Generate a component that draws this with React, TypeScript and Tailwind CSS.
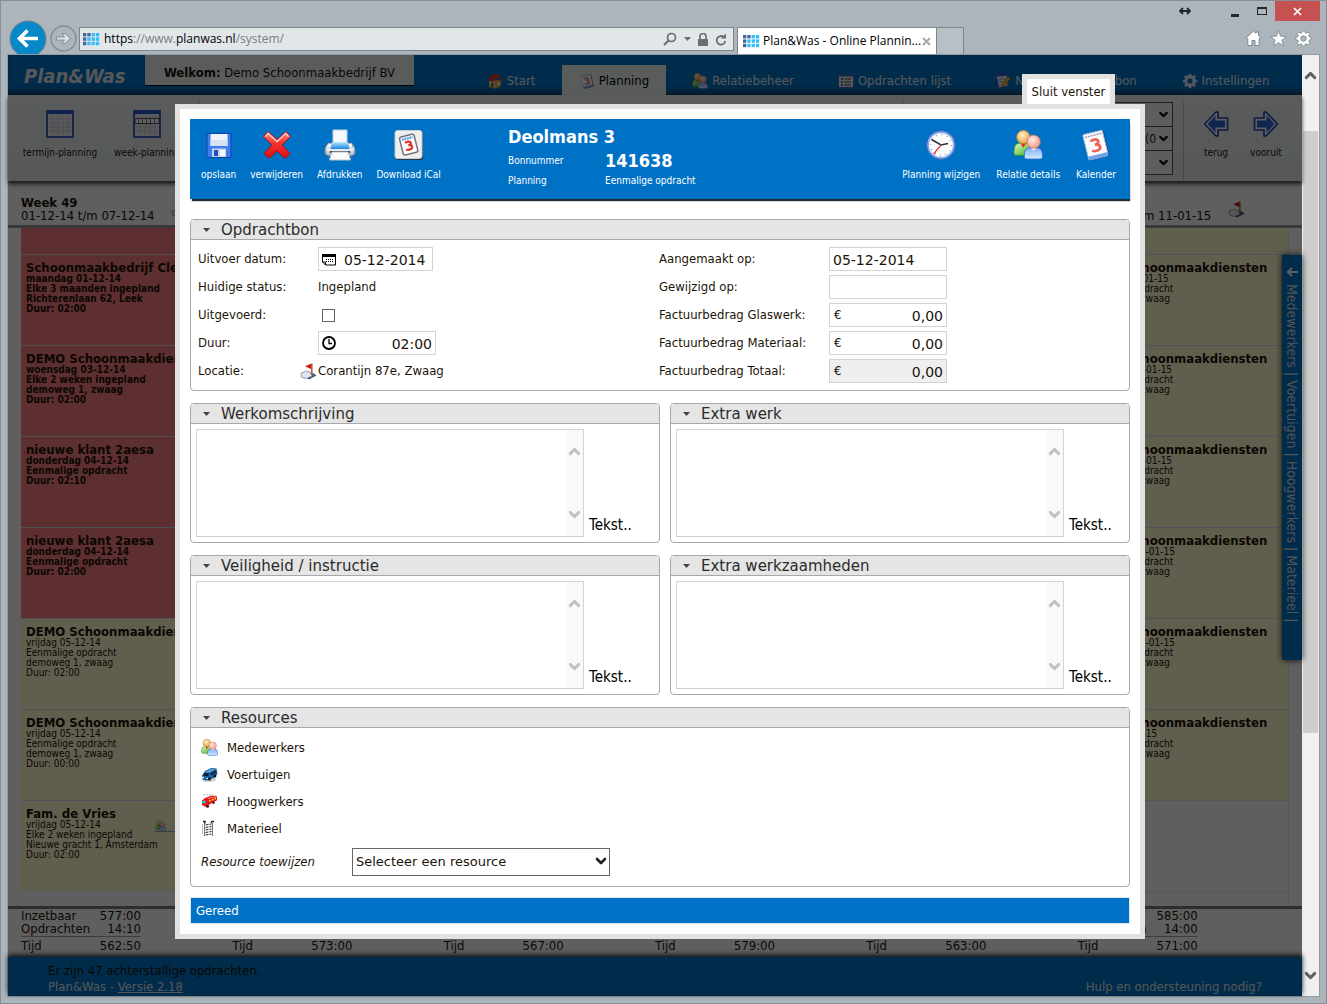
import React from "react";
import { ChevronDown, ChevronUp } from "lucide-react";

/* ---------- icons ---------- */

function UsersIcon({ size = 16 }: { size?: number }) {
  return (
    <svg width={size} height={size} viewBox="0 0 32 32" aria-hidden="true">
      <defs>
        <linearGradient id="ug" x1="0" y1="0" x2="1" y2="1">
          <stop offset="0" stopColor="#d8f7c0" />
          <stop offset="1" stopColor="#3fae1c" />
        </linearGradient>
        <linearGradient id="ub" x1="0" y1="0" x2="0" y2="1">
          <stop offset="0" stopColor="#7fb0f2" />
          <stop offset="1" stopColor="#d5eaff" />
        </linearGradient>
        <radialGradient id="uh" cx=".4" cy=".35" r=".7">
          <stop offset="0" stopColor="#fff3cf" />
          <stop offset="1" stopColor="#dfa13a" />
        </radialGradient>
        <radialGradient id="up" cx=".4" cy=".35" r=".7">
          <stop offset="0" stopColor="#ffe9e2" />
          <stop offset="1" stopColor="#f09a88" />
        </radialGradient>
      </defs>
      <path d="M1 24c0-7 2-10 6-10h9c4 0 5 3 5 7l-6 6H4c-2 0-3-1-3-3z" fill="url(#ug)" stroke="#3a9a22" />
      <path d="m8 14 3 5 3-5z" fill="#e8262a" />
      <circle cx="11" cy="7.500" r="7" fill="url(#uh)" stroke="#c88b2e" />
      <path d="M12 28c0-6 2-9 6-9h8c4 0 5.500 4 5.500 9 0 2-1 3-3 3H15c-2 0-3-1-3-3z" fill="url(#ub)" stroke="#2c6fd0" />
      <path d="m19 19 3 3 3-3z" fill="#fff" />
      <circle cx="22" cy="12.500" r="7" fill="url(#up)" stroke="#dd7f6d" />
    </svg>
  );
}

function CalendarIcon({ size = 16, tilt = -14 }: { size?: number; tilt?: number }) {
  return (
    <svg width={size} height={size} viewBox="0 0 32 32" aria-hidden="true">
      <g transform={`rotate(${tilt} 16 16)`}>
        <rect x="7" y="4" width="20" height="26" rx="1.500" fill="#1d3f78" opacity=".75" />
        <rect x="5.500" y="3" width="20" height="26" rx="1.500" fill="#fdfdff" stroke="#a9b9d6" />
        <path d="M5.500 25.500h20V28a1.500 1.500 0 0 1-1.500 1.500H7A1.500 1.500 0 0 1 5.500 28z" fill="#6fa3e6" />
        <path d="M7 6h17" stroke="#8a98b5" strokeWidth="1.500" strokeDasharray="2 1" />
        <path
          d="M11.500 11.500c1.500-1.800 7.500-1.800 7.500 1.300 0 2.200-2 2.800-4 2.800 2.500 0 4.600.8 4.600 3.300 0 3.400-6.600 3.600-8.600 1.600"
          fill="none"
          stroke="#f0645c"
          strokeWidth="2.800"
        />
      </g>
    </svg>
  );
}

function FloppyIcon() {
  return (
    <svg width="26" height="27" viewBox="0 0 26 27" aria-hidden="true">
      <path d="M1 1.500h24v24H3l-2-2z" fill="#3f7df0" stroke="#0f3fae" />
      <path d="M4.500 2h17v12h-17z" fill="#eef3fb" />
      <path d="M4.500 8h17v6h-17z" fill="#d6e1f3" />
      <path d="M6 16.500h14V25H6z" fill="#c9d3e4" />
      <path d="M8 18h4v6H8z" fill="#1c4fc4" />
      <path d="M14 18h5v6h-5z" fill="#f3f6fb" />
    </svg>
  );
}

function CrossIcon() {
  return (
    <svg width="30" height="30" viewBox="0 0 30 30" aria-hidden="true">
      <defs>
        <linearGradient id="cx" x1="0" y1="0" x2="0" y2="1">
          <stop offset="0" stopColor="#ff8a80" />
          <stop offset=".45" stopColor="#f4312d" />
          <stop offset="1" stopColor="#d80d12" />
        </linearGradient>
      </defs>
      <path
        d="M6 1.500 15 9.500l9-8 4.500 5L20 15l8 8.500-5 5L15 21l-8 7.500-5-5L10 15 1.500 6.500z"
        fill="url(#cx)"
        stroke="#a80f14"
        strokeLinejoin="round"
      />
      <path d="m3.500 6.500 2.700-3 8.800 8 8.800-8 2.700 3" fill="none" stroke="#ffc9c4" strokeWidth="1.300" />
    </svg>
  );
}

function PrinterIcon() {
  return (
    <svg width="32" height="32" viewBox="0 0 32 32" aria-hidden="true">
      <defs>
        <linearGradient id="pr" x1="0" y1="0" x2="0" y2="1">
          <stop offset="0" stopColor="#ffffff" />
          <stop offset="1" stopColor="#a9b4c4" />
        </linearGradient>
        <linearGradient id="pb" x1="0" y1="0" x2="0" y2="1">
          <stop offset="0" stopColor="#b9e6ff" />
          <stop offset="1" stopColor="#1b86e2" />
        </linearGradient>
      </defs>
      <path d="M4 14h24l3 5v6l-3 2H4l-3-2v-6z" fill="url(#pr)" stroke="#66728a" />
      <path d="M9 1h14v13H9z" fill="#f6f8fb" stroke="#c4ccd8" />
      <path d="M8 13h16l1.500 7h-19z" fill="url(#pb)" />
      <path d="M3 21h26" stroke="#e9eef5" strokeWidth="2" />
      <path d="M6 23h20" stroke="#39424f" strokeWidth="2" />
      <path d="M8 23h16l2.500 8h-21z" fill="#fbfcfe" stroke="#b8c1cf" />
      <path d="M28 17h1" stroke="#3fb54b" strokeWidth="1.500" />
    </svg>
  );
}

function ICalIcon() {
  return (
    <svg width="30" height="32" viewBox="0 0 30 32" aria-hidden="true">
      <rect x="2" y="3" width="27" height="28" rx="2.500" fill="#26384f" />
      <rect x="1" y="1.500" width="27" height="28" rx="2.500" fill="#efefef" stroke="#c9c9c9" />
      <g transform="rotate(-14 14 15)">
        <rect x="7" y="6.500" width="15" height="18.500" rx="2" fill="#fff" stroke="#6f7480" strokeWidth="1.500" />
        <path d="M9 9.500h11" stroke="#5aa0dc" strokeWidth="2.500" strokeDasharray="2 .6" />
        <path
          d="M11.500 13.500c1-1.200 5.500-1.200 5.500.9 0 1.500-1.500 2-3 2 2 0 3.400.6 3.400 2.300 0 2.400-5 2.600-6.400 1.200"
          fill="none"
          stroke="#e6322d"
          strokeWidth="2.200"
        />
      </g>
    </svg>
  );
}

function ClockIcon() {
  return (
    <svg width="30" height="30" viewBox="0 0 30 30" aria-hidden="true">
      <circle cx="15" cy="15" r="13.300" fill="#fdfdfd" stroke="#7fa8f0" strokeWidth="2.500" />
      <circle cx="15" cy="15" r="14.400" fill="none" stroke="#2456a8" strokeWidth=".8" />
      <circle cx="15" cy="15" r="10.500" fill="none" stroke="#8d97a8" strokeWidth="1.500" strokeDasharray="1 4.500" />
      <path d="M5.500 9.500 15 15l7-1.500" fill="none" stroke="#27313f" strokeWidth="1.500" />
      <path d="m15 15-7.500 9" stroke="#ee3a3a" strokeWidth="1.300" />
    </svg>
  );
}

function HouseIcon() {
  return (
    <svg width="16" height="16" viewBox="0 0 16 16" aria-hidden="true">
      <path d="M2 7h12v6l-6 2.500L2 14z" fill="#f2d8a2" />
      <path d="M8 7h6v6l-6 2.500z" fill="#e8a24c" />
      <path d="M1 7.500 4 2l6-1.500 5.500 6-1.500 1.500L9 4 6.500 9z" fill="#e23a22" />
      <path d="M4 10h2.500v5L4 14.300z" fill="#5b7a2c" />
      <path d="M10 9.500h2.500V12H10z" fill="#fff2c6" />
      <path d="M1 14c2-2 3 0 4 1H2z" fill="#4fa02f" />
    </svg>
  );
}

function ListIcon() {
  return (
    <svg width="16" height="16" viewBox="0 0 16 16" aria-hidden="true">
      <rect x=".5" y="1.500" width="15" height="13" fill="#dfe6f5" stroke="#3d63c9" />
      <path d="M1 2.500h14" stroke="#3d63c9" strokeWidth="2" />
      <path d="M3 6h2M3 9h2M3 12h2" stroke="#444" strokeWidth="1.500" />
      <path d="M6.500 6H13M6.500 9H13M6.500 12H13" stroke="#777" strokeWidth="1.500" />
    </svg>
  );
}

function NoteIcon() {
  return (
    <svg width="16" height="16" viewBox="0 0 16 16" aria-hidden="true">
      <path d="m1 2 11-1 1 12-9 2z" fill="#e9f0ff" stroke="#4469cc" />
      <path d="M1 2.500 12 1.500" stroke="#3158c8" strokeWidth="2.500" />
      <path d="M4 6h6M4 8.500h4" stroke="#7f8eb5" />
      <path d="m7 11 6-7.500 2.500 2L9.500 13l-3 1z" fill="#f3b63c" stroke="#8c5d12" strokeWidth=".7" />
    </svg>
  );
}

function GearIcon({ size = 16, color = "#dfe8f7", stroke = "none" }: { size?: number; color?: string; stroke?: string }) {
  return (
    <svg width={size} height={size} viewBox="0 0 16 16" aria-hidden="true">
      <path
        fillRule="evenodd"
        d="M6.800.8h2.400l.4 1.900 1.100.4 1.600-1.100 1.700 1.700-1.100 1.600.4 1.100 1.900.4v2.400l-1.900.4-.4 1.100 1.100 1.600-1.700 1.700-1.600-1.100-1.100.4-.4 1.900H6.800l-.4-1.900-1.100-.4L3.700 14 2 12.300l1.100-1.600-.4-1.100L.8 9.200V6.800l1.900-.4.4-1.100L2 3.700 3.700 2l1.600 1.100 1.100-.4zM8 5.400a2.600 2.600 0 1 0 0 5.200 2.600 2.600 0 0 0 0-5.200z"
        fill={color}
        stroke={stroke}
        strokeWidth=".8"
      />
    </svg>
  );
}

function FlagIcon() {
  return (
    <svg width="17" height="17" viewBox="0 0 17 17" aria-hidden="true">
      <path d="M6 14.500 13 10l3.500 2.500L9 16.500z" fill="#4b5672" />
      <path d="M1 11c0-1.500 2-2 3-1.500.5-1.500 3-2 4-.5 2-.5 3 .5 2.500 2L12 12c0 2-2 2-3 2-1 2-4 2-5 .5C2 15 .5 14 1.500 12.500z" fill="#dfe5f1" stroke="#76809b" strokeWidth=".8" />
      <path d="M11 .5h1.600V12H11z" fill="#b2622f" />
      <path d="M11 .8 5 3.300 11 6z" fill="#d9141b" />
    </svg>
  );
}

function VanIcon() {
  return (
    <svg width="17" height="16" viewBox="0 0 17 16" aria-hidden="true">
      <ellipse cx="8" cy="12.500" rx="7" ry="2.500" fill="#999" opacity=".5" />
      <path d="M1 8.500 4 4l6-3 5.500.5 1 5-2.500 4L6 13.500l-4-.5z" fill="#1c5f9f" />
      <path d="m3.500 5.500 6-3.500 5 .3-5.500 3.200z" fill="#58a3dc" />
      <path d="m3.500 6 4.500.3-.8 3L2 8.800z" fill="#0d2036" />
      <path d="m9.500 6 5-2.800.8 2.500-5 2.800z" fill="#14304d" />
      <path d="M1.500 10.500h1.500M5.500 11.300H7" stroke="#e8f3ff" strokeWidth="1.300" />
      <circle cx="8.500" cy="12" r="1.500" fill="#111" />
      <circle cx="14" cy="9" r="1.400" fill="#111" />
    </svg>
  );
}

function TruckIcon() {
  return (
    <svg width="17" height="15" viewBox="0 0 17 15" aria-hidden="true">
      <path d="M2 .8h8l5 .7" stroke="#b5b5b5" fill="none" strokeDasharray="2 1" />
      <path d="M1 6.500 4 4l6-2.300 6 .6v4L10 9.500 5 13l-4-2z" fill="#e8131b" />
      <path d="m7 4.500 8.500-1.700" stroke="#ff8d6b" />
      <path d="m8 7 7-2.500" stroke="#ffd92e" strokeWidth="1.400" strokeDasharray="2 1" />
      <path d="M1.300 6.500 5 7l-.8 2.500L1 9z" fill="#25c3d6" />
      <circle cx="6.500" cy="12.300" r="1.500" fill="#5c1014" />
      <circle cx="12.500" cy="8.700" r="1.300" fill="#5c1014" />
    </svg>
  );
}

function LadderIcon() {
  return (
    <svg width="14" height="17" viewBox="0 0 14 17" aria-hidden="true">
      <path d="M3.500 3v13M11.500 3v13" stroke="#777" />
      <path d="M2 1.500h2v2M10 3l1-1.500h2" stroke="#111" strokeWidth="1.300" fill="none" />
      <path d="m4.500 5 6-1M4.500 7.500l6-1M4.500 10l6-1M4.500 12.500l6-1M4.500 15l6-1" stroke="#222" strokeDasharray="3 1" />
      <path d="M1.500 4v10" stroke="#bbb" />
    </svg>
  );
}

function PlanIcon({ week = false }: { week?: boolean }) {
  return (
    <svg width="28" height="28" viewBox="0 0 28 28" aria-hidden="true">
      <rect x="1" y="1" width="26" height="26" fill="#eef0f5" stroke="#3f63c4" strokeWidth="2" />
      <path d="M1 2.500h26" stroke="#2453c8" strokeWidth="3" />
      <path d="M7 6v19M12 6v19M17 6v19M22 6v19M3 9h22M3 13h22M3 17h22M3 21h22" stroke="#c9ccd4" />
      {week && <path d="M2 8.500h24v5H2z" fill="#fff" stroke="#555" />}
      {week && <path d="M5 11h19" stroke="#777" strokeWidth="4" strokeDasharray="1 3" />}
    </svg>
  );
}

function BlockArrow({ flip = false }: { flip?: boolean }) {
  return (
    <svg width="26" height="28" viewBox="0 0 26 28" aria-hidden="true">
      <g transform={flip ? "translate(26 0) scale(-1 1)" : undefined}>
        <path d="M1.500 14 13 2h2v6h9.500v12H15v6h-2z" fill="#f2f7ff" stroke="#2447b8" strokeWidth="1.700" strokeLinejoin="round" />
        <path d="m4.500 14 8-8.500v5h9.500v7h-9.500v5z" fill="#2a68cf" />
      </g>
    </svg>
  );
}

function SiteIcon() {
  const cells = [0, 1, 2, 3];
  return (
    <svg width="17" height="13" viewBox="0 0 17 13" aria-hidden="true" className="shrink-0">
      {cells.map((c) =>
        [0, 1, 2].map((r) => (
          <rect
            key={`${c}-${r}`}
            x={c * 4.300}
            y={r * 4.400}
            width="3.300"
            height="3.400"
            fill={c === 0 || (c === 1 && r === 0) ? "#45639c" : "#35bdf5"}
          />
        ))
      )}
    </svg>
  );
}

/* ---------- browser chrome ---------- */

function BrowserBar() {
  return (
    <header className="shrink-0 font-['Open_Sans',sans-serif] text-[12px] text-black">
      <div className="flex h-[26px] items-start justify-end pr-[6px]">
        <svg width="12" height="20" viewBox="0 0 12 20" className="mr-[30px]" aria-hidden="true">
          <path d="M2 10h8M4 7l-3 3 3 3M8 7l3 3-3 3" stroke="#222" strokeWidth="1.800" fill="none" />
        </svg>
        <button aria-label="Minimaliseren" className="h-5 w-[27px]">
          <span className="mx-auto mt-2 block h-[3px] w-2 bg-neutral-800" />
        </button>
        <button aria-label="Maximaliseren" className="h-5 w-[27px]">
          <span className="mx-auto block h-2 w-[10px] border border-t-2 border-neutral-800" />
        </button>
        <button aria-label="Sluiten" className="flex h-5 w-[45px] items-center justify-center bg-[#c75050]">
          <svg width="9" height="9" viewBox="0 0 9 9" aria-hidden="true">
            <path d="m1 1 7 7M8 1 1 8" stroke="#fff" strokeWidth="1.700" />
          </svg>
        </button>
      </div>
      <div className="flex h-[27px] items-end pl-2">
        <div className="flex w-[70px] items-end gap-[3px]">
          <button aria-label="Terug" className="shrink-0">
            <svg width="38" height="34" viewBox="0 0 38 34" className="block">
              <circle cx="19" cy="19" r="18" fill="#0788c8" stroke="#77838a" />
              <path d="M29 18.500H12M18.500 10.500l-8 8 8 8" stroke="#fff" strokeWidth="3.700" fill="none" />
            </svg>
          </button>
          <button aria-label="Vooruit" className="shrink-0 pb-[2px]">
            <svg width="27" height="27" viewBox="0 0 27 27" className="block">
              <circle cx="13.500" cy="13.500" r="12.500" fill="none" stroke="#838e95" strokeWidth="1.500" />
              <path d="M6.500 12h8L12 8.500h2.800l5.700 5-5.700 5H12l2.500-3.500h-8z" fill="#dfe3e5" stroke="#838e95" />
            </svg>
          </button>
        </div>
        <div className="mb-[3px] flex h-6 flex-1 items-center border border-[#7b868d] bg-[#e1e6e9] pr-[6px] pl-[3px]">
          <SiteIcon />
          <p className="ml-1 flex-1 text-[#7a7f82]">
            <span className="text-black">https</span>://www.<span className="text-black">planwas.nl</span>/system/
          </p>
          <div className="flex items-center gap-[7px]">
            <svg width="14" height="14" viewBox="0 0 14 14" aria-hidden="true">
              <circle cx="8.500" cy="5.500" r="4" fill="none" stroke="#6d6d6d" strokeWidth="1.700" />
              <path d="m5.500 8.500-4.500 4.500" stroke="#6d6d6d" strokeWidth="2.200" />
            </svg>
            <svg width="7" height="4" viewBox="0 0 7 4" aria-hidden="true">
              <path d="M0 0h7L3.500 4z" fill="#6d6d6d" />
            </svg>
            <svg width="10" height="13" viewBox="0 0 10 13" aria-hidden="true">
              <path d="M0 6h10v7H0z" fill="#6d6d6d" />
              <path d="M2 7V3.500a3 3 0 0 1 6 0V7" fill="none" stroke="#6d6d6d" strokeWidth="1.700" />
            </svg>
            <svg width="12" height="13" viewBox="0 0 12 13" aria-hidden="true">
              <path d="M9 4.200A4.300 4.300 0 1 0 10.300 8" fill="none" stroke="#6d6d6d" strokeWidth="1.800" />
              <path d="M6 5.500h5V.5z" fill="#6d6d6d" />
            </svg>
          </div>
        </div>
        <div className="ml-[3px] flex h-[27px] w-[200px] items-center border border-b-0 border-[#7b868d] bg-white px-[5px]">
          <SiteIcon />
          <span className="ml-[3px] flex-1 whitespace-nowrap">Plan&amp;Was - Online Plannin...</span>
          <button aria-label="Tabblad sluiten">
            <svg width="9" height="9" viewBox="0 0 9 9" aria-hidden="true">
              <path d="m1 1 7 7M8 1 1 8" stroke="#a8a8a8" strokeWidth="2" />
            </svg>
          </button>
        </div>
        <div className="h-[27px] w-[27px] border border-b-0 border-l-0 border-[#7b868d] bg-[#b7c0c5]" />
        <div className="flex h-full w-[362px] items-start justify-end gap-2 pt-[3px] pr-[14px]">
          <svg width="17" height="17" viewBox="0 0 17 17" aria-hidden="true">
            <path d="M8.500 1 11 3.300V2h2.500v3.600l2.700 2.600-1 1.100-1-.9v7.100H10V10.500H7v5H2.800V8.400l-1 .9-1-1.100z" fill="#fff" stroke="#7b868d" />
          </svg>
          <svg width="17" height="17" viewBox="0 0 17 17" aria-hidden="true">
            <path d="m8.500.8 2.100 5.400 5.800.3-4.500 3.700 1.500 5.600-4.900-3.200-4.900 3.200 1.500-5.600L.6 6.500l5.800-.3z" fill="#fff" stroke="#7b868d" strokeWidth=".8" />
          </svg>
          <GearIcon size={17} color="#fff" stroke="#7b868d" />
        </div>
      </div>
    </header>
  );
}

function PageScrollbar() {
  return (
    <div className="flex w-[17px] shrink-0 flex-col items-center bg-[#f0f0f0]" aria-hidden="true">
      <ChevronUp size={17} strokeWidth={4} color="#606060" className="mt-3" />
      <div className="mt-[47px] h-[602px] w-[15px] bg-[#cdcdcd]" />
      <ChevronDown size={17} strokeWidth={4} color="#606060" className="mt-auto mb-3" />
    </div>
  );
}

/* ---------- planning page behind the dialog ---------- */

type Job = { name: string; lines: string[]; tone: "late" | "open" | "none"; link?: boolean };

const firstColumn: Job[] = [
  { name: "Schoonmaakbedrijf Cleanfix", lines: ["maandag 01-12-14", "Elke 3 maanden ingepland", "Richterenlaan 62, Leek", "Duur: 02:00"], tone: "late" },
  { name: "DEMO Schoonmaakdiensten", lines: ["woensdag 03-12-14", "Elke 2 weken ingepland", "demoweg 1, zwaag", "Duur: 02:00"], tone: "late" },
  { name: "nieuwe klant 2aesa", lines: ["donderdag 04-12-14", "Eenmalige opdracht", "Duur: 02:10"], tone: "late" },
  { name: "nieuwe klant 2aesa", lines: ["donderdag 04-12-14", "Eenmalige opdracht", "Duur: 02:00"], tone: "late" },
  { name: "DEMO Schoonmaakdiensten", lines: ["vrijdag 05-12-14", "Eenmalige opdracht", "demoweg 1, zwaag", "Duur: 02:00"], tone: "open" },
  { name: "DEMO Schoonmaakdiensten", lines: ["vrijdag 05-12-14", "Eenmalige opdracht", "demoweg 1, zwaag", "Duur: 00:00"], tone: "open" },
  { name: "Fam. de Vries", lines: ["vrijdag 05-12-14", "Elke 2 weken ingepland", "Nieuwe gracht 1, Amsterdam", "Duur: 02:00"], tone: "open", link: true },
];

const lastColumn: Job[] = [
  ...["maandag 05-01-15", "woensdag 07-01-15", "woensdag 07-01-15", "donderdag 08-01-15", "donderdag 08-01-15", "vrijdag 09-01-15"].map(
    (day): Job => ({ name: "DEMO Schoonmaakdiensten", lines: [day, "Eenmalige opdracht", "demoweg 1, zwaag"], tone: "open" })
  ),
  { name: "", lines: [], tone: "none" },
];

const tones = {
  late: "bg-[#fa7d80] font-bold border-[#cfd6da]",
  open: "bg-[#fffbce] border-[#dcdce6]",
  none: "bg-transparent border-[#e6e6e6]",
};

const weeks = [
  { title: "Week 49", range: "01-12-14 t/m 07-12-14", jobs: firstColumn, available: "577:00", planned: "14:10", left: "562:50" },
  { title: "", range: "", jobs: [], left: "573:00" },
  { title: "", range: "", jobs: [], left: "567:00" },
  { title: "", range: "", jobs: [], left: "579:00" },
  { title: "", range: "", jobs: [], left: "563:00" },
  { title: "Week 2", range: "05-01-15 t/m 11-01-15", jobs: lastColumn, available: "585:00", planned: "14:00", left: "571:00" },
];

const navItems = [
  { label: "Start", icon: <HouseIcon />, box: "w-[102px]" },
  { label: "Planning", icon: <CalendarIcon />, box: "w-[104px] bg-[#eff3f4] text-black", active: true },
  { label: "Relatiebeheer", icon: <UsersIcon />, box: "w-[154px]" },
  { label: "Opdrachten lijst", icon: <ListIcon />, box: "w-[149px]" },
  { label: "Nieuwe opdrachtbon", icon: <NoteIcon />, box: "w-[194px]" },
  { label: "Instellingen", icon: <GearIcon />, box: "w-[125px]" },
];

function JobCard({ job }: { job: Job }) {
  return (
    <article className={`h-[91px] shrink-0 overflow-hidden border-t pt-[6px] pl-[5px] whitespace-nowrap ${tones[job.tone]}`}>
      <h3 className="text-[13px] leading-[13px] font-bold">{job.name}</h3>
      <div className="flex text-[10px] leading-[10px]">
        <div className={job.link ? "w-[129px]" : ""}>
          {job.lines.map((line) => (
            <p key={line}>{line}</p>
          ))}
        </div>
        {job.link && (
          <a href="#medewerkers" aria-label="Medewerkers" className="flex h-3 w-10 border-b border-slate-400">
            <UsersIcon size={11} />
          </a>
        )}
      </div>
    </article>
  );
}

function PlanningPage() {
  return (
    <div className="flex min-w-0 flex-1 flex-col bg-[#fbfbfb] text-[13px] text-[#1c1409]">
      <div className="flex h-10 shrink-0 items-start bg-[#0072c6] pl-4 text-[#e8edf2] shadow-[inset_0_-8px_8px_-6px_#20303c]">
        <h1 className="mt-2 w-[121px] text-[20px] leading-[26px] font-bold text-[#e4e8ea] italic">Plan&amp;Was</h1>
        <p className="flex h-[31px] w-[269px] items-center justify-center border-b border-black bg-[#eff3f4] pt-[6px] whitespace-pre text-[#1c1409]">
          <b>Welkom:</b> Demo Schoonmaakbedrijf BV
        </p>
        <nav className="ml-auto flex h-full items-end pr-[14px] whitespace-nowrap">
          {navItems.map((item) => (
            <a
              key={item.label}
              href="#nav"
              aria-current={item.active ? "page" : undefined}
              className={`flex h-[30px] items-center justify-center gap-1 pt-[2px] ${item.box}`}
            >
              {item.icon}
              {item.label}
            </a>
          ))}
        </nav>
      </div>

      <div className="z-10 flex h-[86px] shrink-0 items-start bg-linear-to-b from-[#eff3f4] to-[#e6e9ea] pt-[7px] text-[10px] leading-3 shadow-[0_3px_4px_#444]">
        <button className="mt-2 ml-[15px] flex w-[74px] flex-col items-center gap-[9px] whitespace-nowrap">
          <PlanIcon />
          termijn-planning
        </button>
        <button className="mt-2 ml-[14px] flex w-[72px] flex-col items-center gap-[9px] whitespace-nowrap">
          <PlanIcon week />
          week-planning
        </button>
        <div className="ml-4 h-[74px] w-px bg-[#a9c4d8]" />
        <div className="ml-auto flex w-[280px] flex-col items-end border-l border-[#a9c4d8] pr-[10px]">
          {["", "(0", ""].map((text, i) => (
            <div key={i} className="relative -mb-px w-[60px]">
              <select aria-label={`Filter ${i + 1}`} className="h-[25px] w-full appearance-none border border-neutral-600 bg-[#f7f8f8] pl-[31px] text-[12px]">
                <option>{text}</option>
              </select>
              <ChevronDown size={13} strokeWidth={4} className="pointer-events-none absolute top-[6px] right-[3px]" />
            </div>
          ))}
        </div>
        <div className="flex h-[78px] w-[119px] border-l border-[#a9c4d8] pt-2 pl-[7px]">
          <button className="flex w-[50px] flex-col items-center gap-[9px]">
            <BlockArrow />
            terug
          </button>
          <button className="flex w-[50px] flex-col items-center gap-[9px]">
            <BlockArrow flip />
            vooruit
          </button>
        </div>
      </div>

      <div className="grid h-[47px] shrink-0 grid-cols-6 border-b-[3px] border-[#989898] px-[13px] pt-[15px] leading-[13px] whitespace-nowrap">
        {weeks.map((week, i) => (
          <div key={i} className="relative">
            <h2 className="font-bold">{week.title}</h2>
            <p>{week.range}</p>
            {week.range && (
              <span className="absolute top-[5px] left-[150px]">
                <FlagIcon />
              </span>
            )}
          </div>
        ))}
      </div>

      <div className="grid min-h-0 flex-1 grid-cols-6 overflow-hidden px-[13px]">
        {weeks.map((week, i) => (
          <section key={i} className="flex flex-col overflow-hidden border-r border-[#e6e6e6]">
            <div className={`h-[26px] shrink-0 ${i === 0 ? "bg-[#fa7d80]" : "bg-[#fffbce]"}`} />
            {week.jobs.map((job, j) => (
              <JobCard key={j} job={job} />
            ))}
            <div className="flex-1 border-t border-[#e6e6e6]" />
          </section>
        ))}
      </div>

      <div className="grid h-[51px] shrink-0 grid-cols-6 border-t-[3px] border-[#7c7c7c] px-[13px] whitespace-nowrap">
        {weeks.map((week, i) => (
          <div key={i} className="flex w-[120px] flex-col justify-end pb-[3px]">
            {week.available && (
              <dl className="grid grid-cols-[1fr_auto] border-b border-neutral-400 pb-px leading-[13px]">
                <dt>Inzetbaar</dt>
                <dd>{week.available}</dd>
                <dt>Opdrachten</dt>
                <dd className="text-right">{week.planned}</dd>
              </dl>
            )}
            <dl className="flex justify-between leading-[17px]">
              <dt>Tijd</dt>
              <dd>{week.left}</dd>
            </dl>
          </div>
        ))}
      </div>

      <footer className="z-10 flex h-[39px] shrink-0 items-end justify-between bg-[#0072c6] pr-10 pb-px pl-10 leading-4 shadow-[0_-2px_5px_#222]">
        <div>
          <p>Er zijn 47 achterstallige opdrachten.</p>
          <p className="text-[#e0e4e8]">
            Plan&amp;Was -{" "}
            <a href="#versie" className="underline">
              Versie 2.18
            </a>
          </p>
        </div>
        <a href="#hulp" className="text-[#e0e4e8]">
          Hulp en ondersteuning nodig?
        </a>
      </footer>

      <aside className="absolute top-[200px] right-0 z-10 flex h-[405px] w-5 items-center gap-[7px] bg-[#0072c6] pt-3 text-[14px] leading-5 whitespace-nowrap text-[#d8dde2] shadow-[0_0_6px_#222] [writing-mode:vertical-rl]">
        <svg width="13" height="10" viewBox="0 0 13 10" aria-hidden="true">
          <path d="M12 5H2.500M6 1 2 5l4 4" stroke="#fff" strokeWidth="2" fill="none" />
        </svg>
        Medewerkers | Voertuigen | Hoogwerkers | Materieel |
      </aside>
    </div>
  );
}

/* ---------- dialog ---------- */

function ToolButton({ icon, label }: { icon: React.ReactNode; label: string }) {
  return (
    <button className="flex flex-col items-center gap-2 text-[10px] leading-3 whitespace-nowrap">
      <span className="flex h-8 items-center">{icon}</span>
      {label}
    </button>
  );
}

function Panel({ title, children }: { title: string; children: React.ReactNode }) {
  return (
    <section className="overflow-hidden rounded-[4px] border border-[#a8a8a8] bg-white">
      <h2 className="border-b border-[#a8a8a8] bg-[#e5e5e5]">
        <button className="flex h-[19px] w-full items-center pl-3 font-['DejaVu_Sans',sans-serif] text-[15px] leading-[19px] text-[#2b2b2b]">
          <svg width="7" height="4" viewBox="0 0 7 4" aria-hidden="true">
            <path d="M0 0h7L3.500 4z" fill="#444" />
          </svg>
          <span className="ml-[11px] pt-px">{title}</span>
        </button>
      </h2>
      {children}
    </section>
  );
}

const field =
  "h-6 w-[118px] border border-[#d3d3d3] bg-white px-[3px] pt-px font-['DejaVu_Sans',sans-serif] text-[14px] text-[#1c1409]";

function MoneyRow({ id, label, total = false }: { id: string; label: string; total?: boolean }) {
  return (
    <div className="grid h-7 grid-cols-[170px_1fr] items-center">
      <label htmlFor={id}>{label}</label>
      <div className="relative w-[118px]">
        <span className="absolute top-1 left-[5px] leading-4">€</span>
        <input id={id} defaultValue="0,00" readOnly={total} className={`block text-right ${field} ${total ? "bg-[#efefef]!" : ""}`} />
      </div>
    </div>
  );
}

function TextPanel({ title }: { title: string }) {
  return (
    <Panel title={title}>
      <div className="flex items-end p-[5px]">
        <div className="relative h-[108px] w-[388px]">
          <textarea aria-label={title} className="block h-full w-full resize-none border border-[#d3d3d3] bg-white p-1" />
          <div className="absolute inset-y-px right-px flex w-[17px] flex-col items-center justify-between bg-[#f9f9f9] py-[13px] text-[#c1c1c1]">
            <ChevronUp size={17} strokeWidth={4} />
            <ChevronDown size={17} strokeWidth={4} />
          </div>
        </div>
        <button className="ml-[5px] text-[15px] leading-6 text-black">Tekst..</button>
      </div>
    </Panel>
  );
}

const resources = [
  { label: "Medewerkers", icon: <UsersIcon size={17} /> },
  { label: "Voertuigen", icon: <VanIcon /> },
  { label: "Hoogwerkers", icon: <TruckIcon /> },
  { label: "Materieel", icon: <LadderIcon /> },
];

function OrderDialog() {
  return (
    <div role="dialog" aria-label="Opdrachtbon" className="absolute top-[49px] right-[157px] left-[167px] z-30 border-[5px] border-[#e2e2e2] bg-white p-[10px] text-[13px] text-[#1c1409]">
      <button className="absolute -top-[35px] right-[25px] h-[30px] w-[93px] border-[5px] border-b-0 border-[#e2e2e2] bg-white leading-5 whitespace-nowrap">
        Sluit venster
      </button>

      <div className="mb-5 flex h-20 items-start bg-[#0072c6] pr-[14px] pl-[11px] text-white shadow-[1px_3px_1px_-1px_#1e2a36]">
        <div className="flex w-[307px] gap-[14px] pt-[10px]">
          <ToolButton icon={<FloppyIcon />} label="opslaan" />
          <ToolButton icon={<CrossIcon />} label="verwijderen" />
          <ToolButton icon={<PrinterIcon />} label="Afdrukken" />
          <ToolButton icon={<ICalIcon />} label="Download iCal" />
        </div>
        <div className="grid grid-cols-[97px_1fr] grid-rows-[24px_24px_16px] items-center pt-[5px] text-[10px] whitespace-nowrap">
          <h1 className="col-span-2 text-[18px] font-bold">Deolmans 3</h1>
          <span>Bonnummer</span>
          <b className="text-[18px]">141638</b>
          <span>Planning</span>
          <span>Eenmalige opdracht</span>
        </div>
        <div className="ml-auto flex gap-4 pt-[10px]">
          <ToolButton icon={<ClockIcon />} label="Planning wijzigen" />
          <ToolButton icon={<UsersIcon size={30} />} label="Relatie details" />
          <ToolButton icon={<CalendarIcon size={32} />} label="Kalender" />
        </div>
      </div>

      <div className="flex flex-col gap-3">
        <Panel title="Opdrachtbon">
          <div className="grid grid-cols-[461fr_470fr] py-[5px] pl-[7px]">
            <div>
              <div className="grid h-7 grid-cols-[120px_1fr] items-center">
                <label htmlFor="uitvoer">Uitvoer datum:</label>
                <div className="relative w-[115px]">
                  <svg width="14" height="12" viewBox="0 0 14 12" className="absolute top-[7px] left-1" aria-hidden="true">
                    <path d="M0 0h14v3H0z" />
                    <path d="M.5 3v5l3 3h10V3M.5 8h3v3" fill="none" stroke="#000" />
                    <path d="M4 5.500h8M4 7.500h8" stroke="#000" strokeDasharray="1 1" />
                  </svg>
                  <input id="uitvoer" defaultValue="05-12-2014" className={`block w-[115px]! pl-[25px]! ${field}`} />
                </div>
              </div>
              <div className="grid h-7 grid-cols-[120px_1fr] items-center">
                <span>Huidige status:</span>
                <span>Ingepland</span>
              </div>
              <div className="grid h-7 grid-cols-[120px_1fr] items-center">
                <label htmlFor="uitgevoerd">Uitgevoerd:</label>
                <input id="uitgevoerd" type="checkbox" className="ml-1 size-[13px] appearance-none border border-[#666] bg-white" />
              </div>
              <div className="grid h-7 grid-cols-[120px_1fr] items-center">
                <label htmlFor="duur">Duur:</label>
                <div className="relative w-[118px]">
                  <svg width="14" height="14" viewBox="0 0 14 14" className="absolute top-[5px] left-1" aria-hidden="true">
                    <circle cx="7" cy="7" r="6" fill="none" stroke="#000" strokeWidth="1.800" />
                    <path d="M7 3v4.500h3" fill="none" stroke="#000" strokeWidth="1.300" />
                  </svg>
                  <input id="duur" defaultValue="02:00" className={`block text-right ${field}`} />
                </div>
              </div>
              <div className="grid h-7 grid-cols-[102px_18px_1fr] items-center">
                <span>Locatie:</span>
                <FlagIcon />
                <span>Corantijn 87e, Zwaag</span>
              </div>
            </div>
            <div>
              <div className="grid h-7 grid-cols-[170px_1fr] items-center">
                <label htmlFor="aangemaakt">Aangemaakt op:</label>
                <input id="aangemaakt" defaultValue="05-12-2014" className={field} />
              </div>
              <div className="grid h-7 grid-cols-[170px_1fr] items-center">
                <label htmlFor="gewijzigd">Gewijzigd op:</label>
                <input id="gewijzigd" className={field} />
              </div>
              <MoneyRow id="glaswerk" label="Factuurbedrag Glaswerk:" />
              <MoneyRow id="materiaal" label="Factuurbedrag Materiaal:" />
              <MoneyRow id="totaal" label="Factuurbedrag Totaal:" total />
            </div>
          </div>
        </Panel>

        <div className="grid grid-cols-[47fr_46fr] gap-x-[10px] gap-y-3">
          <TextPanel title="Werkomschrijving" />
          <TextPanel title="Extra werk" />
          <TextPanel title="Veiligheid / instructie" />
          <TextPanel title="Extra werkzaamheden" />
        </div>

        <Panel title="Resources">
          <div className="pt-[6px] pb-[10px] pl-[10px]">
            <ul>
              {resources.map((r) => (
                <li key={r.label} className="flex h-[27px] items-center">
                  <span className="w-[26px]">{r.icon}</span>
                  {r.label}
                </li>
              ))}
            </ul>
            <div className="mt-[6px] flex items-center">
              <label htmlFor="resource" className="w-[151px] italic">
                Resource toewijzen
              </label>
              <div className="relative w-[258px]">
                <select id="resource" className="block h-7 w-full appearance-none border border-[#666] bg-white px-[3px] font-['DejaVu_Sans',sans-serif] text-[13px]">
                  <option>Selecteer een resource</option>
                </select>
                <ChevronDown size={16} strokeWidth={4} color="#222" className="pointer-events-none absolute top-[5px] right-[1px]" />
              </div>
            </div>
          </div>
        </Panel>
      </div>

      <div className="mt-[10px] flex h-[27px] items-center border border-[#dfe6ec] bg-[#0072c6] pl-[5px] text-white">Gereed</div>
    </div>
  );
}

export default function App() {
  return (
    <div className="flex h-screen min-h-[1004px] flex-col border border-[#858f95] bg-[#abb5bb] font-['DejaVu_Sans_Condensed','DejaVu_Sans',sans-serif]">
      <BrowserBar />
      <main className="mx-[6px] mb-[6px] flex min-h-0 flex-1 border border-[#8f999f]">
        <div className="relative flex min-w-0 flex-1">
          <PlanningPage />
          <div className="absolute inset-0 z-20 bg-black/[0.625]" />
          <OrderDialog />
        </div>
        <PageScrollbar />
      </main>
    </div>
  );
}
